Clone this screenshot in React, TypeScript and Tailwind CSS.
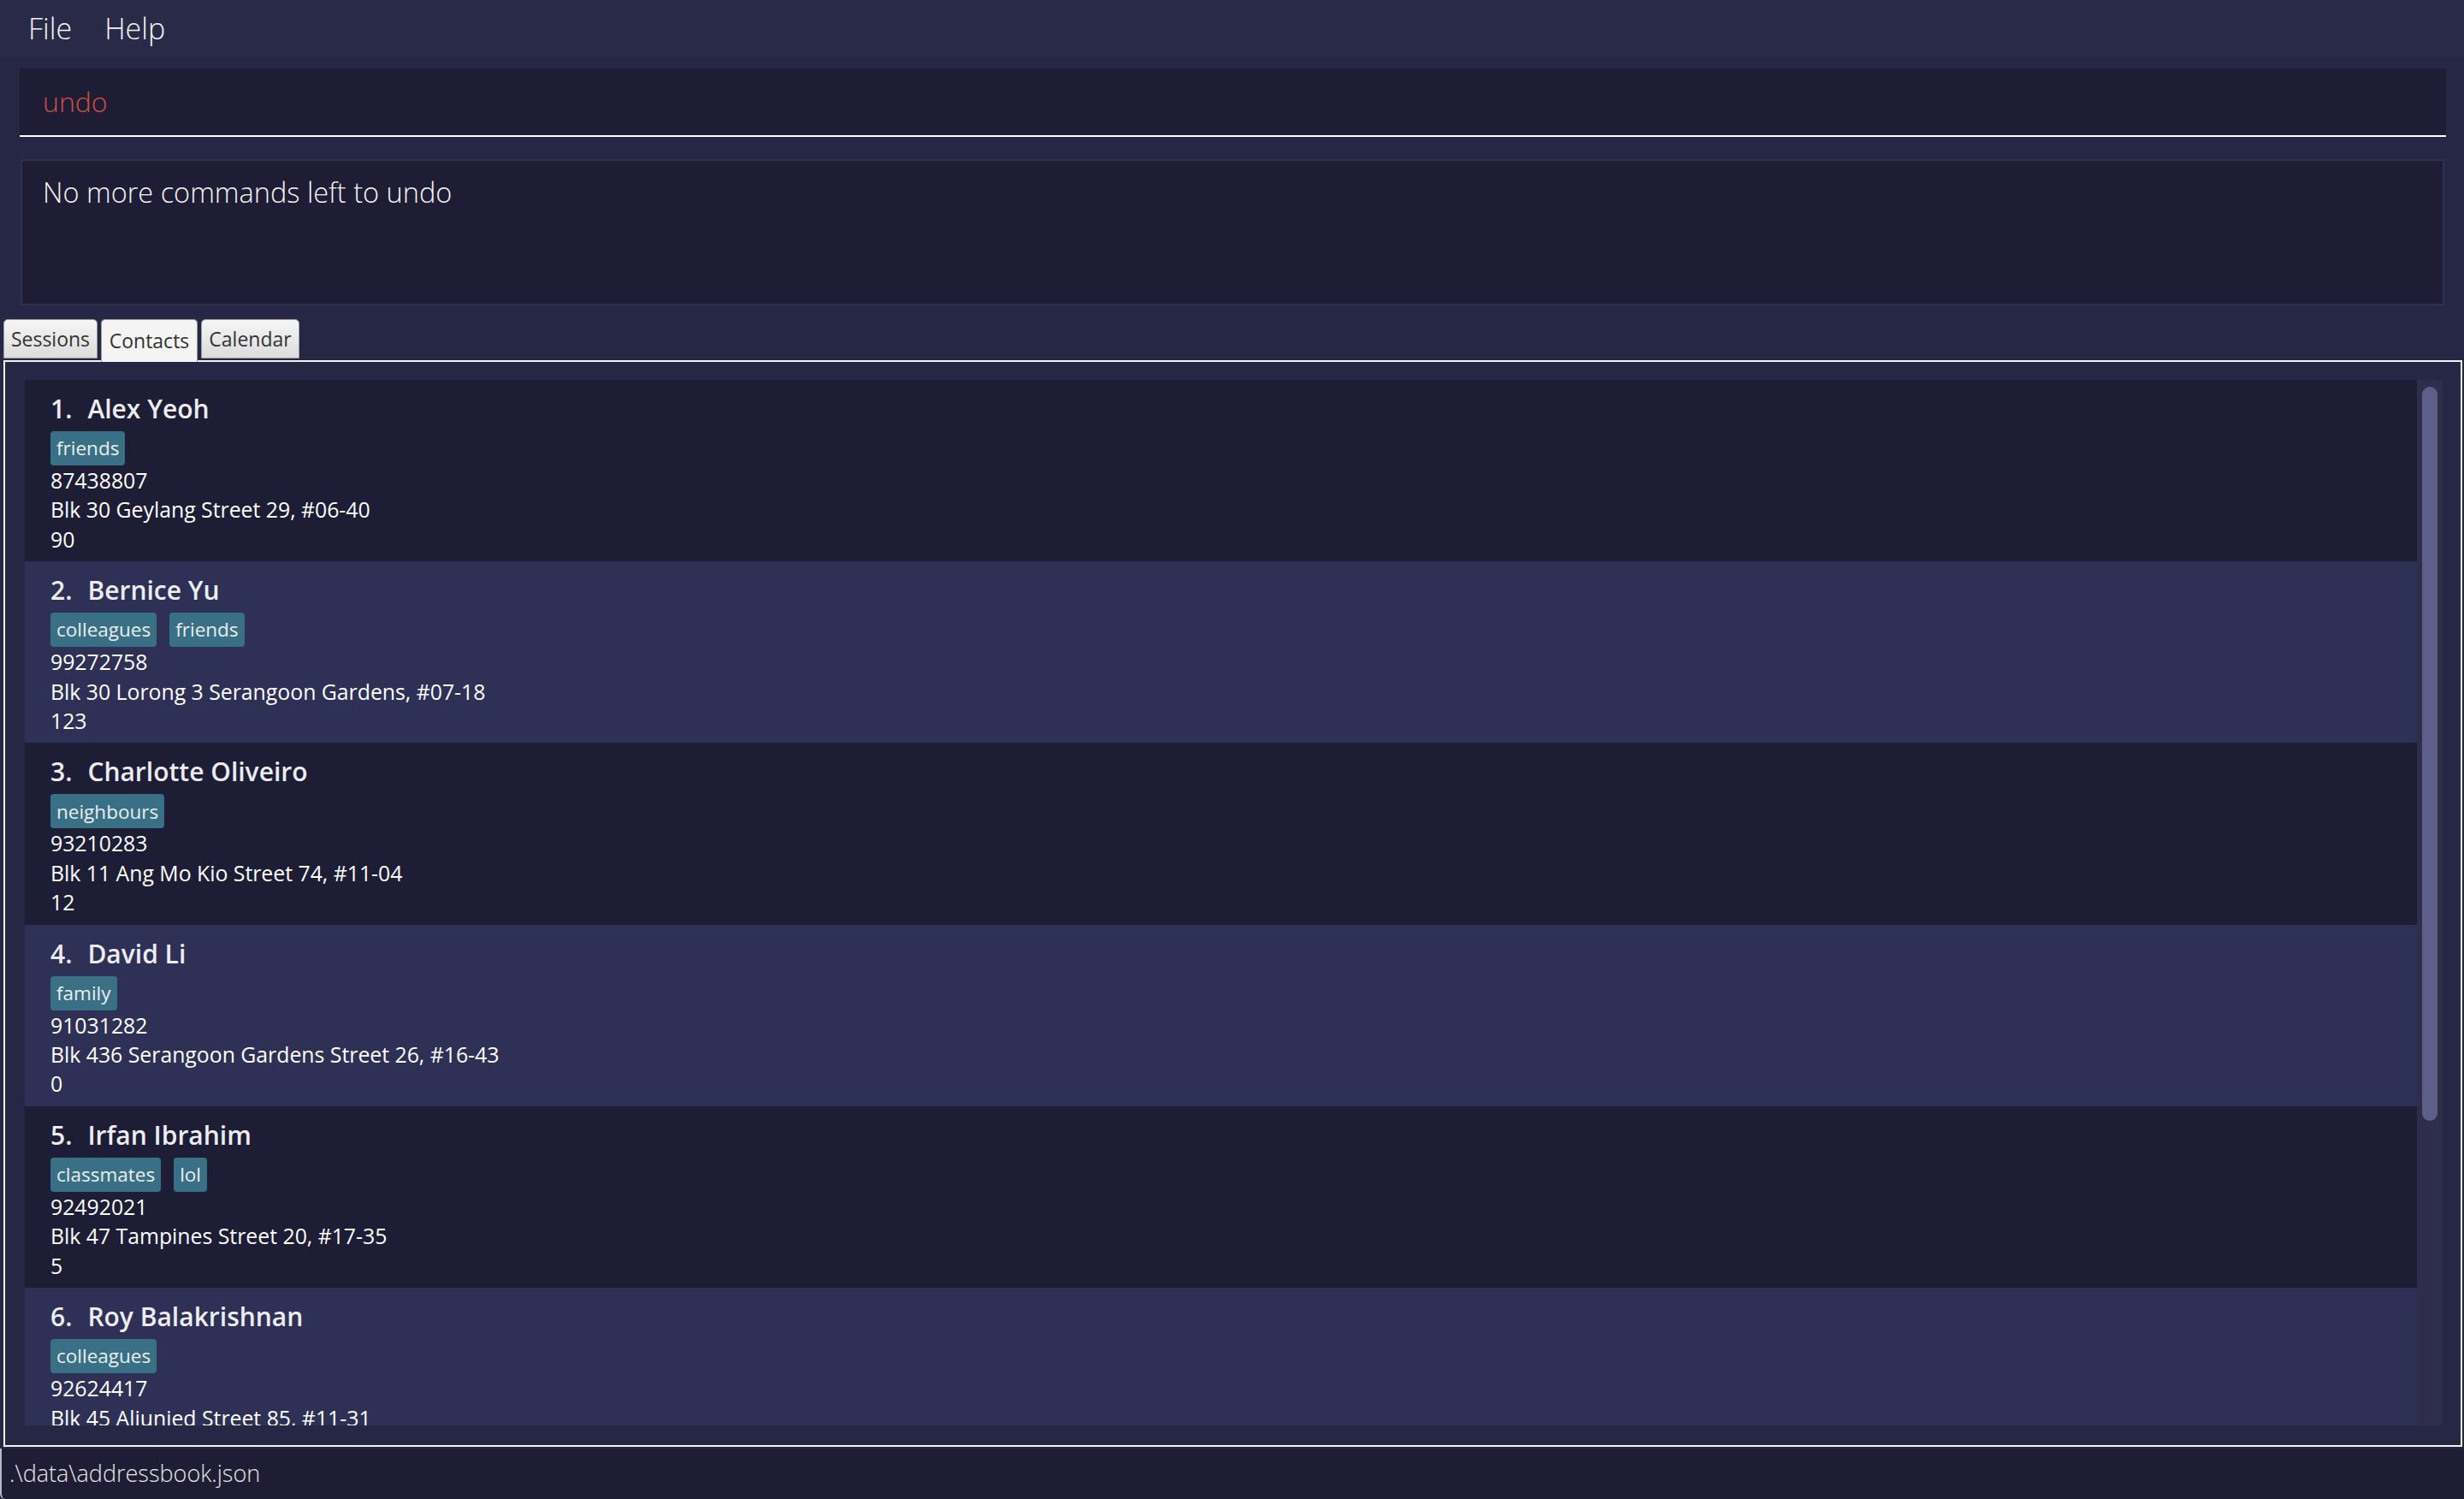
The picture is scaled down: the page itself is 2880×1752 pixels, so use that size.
import React from 'react';

type Person = {
  name: string;
  tags: string[];
  phone: string;
  address: string;
  value?: string;
};

const people: Person[] = [
  { name: 'Alex Yeoh', tags: ['friends'], phone: '87438807', address: 'Blk 30 Geylang Street 29, #06-40', value: '90' },
  { name: 'Bernice Yu', tags: ['colleagues', 'friends'], phone: '99272758', address: 'Blk 30 Lorong 3 Serangoon Gardens, #07-18', value: '123' },
  { name: 'Charlotte Oliveiro', tags: ['neighbours'], phone: '93210283', address: 'Blk 11 Ang Mo Kio Street 74, #11-04', value: '12' },
  { name: 'David Li', tags: ['family'], phone: '91031282', address: 'Blk 436 Serangoon Gardens Street 26, #16-43', value: '0' },
  { name: 'Irfan Ibrahim', tags: ['classmates', 'lol'], phone: '92492021', address: 'Blk 47 Tampines Street 20, #17-35', value: '5' },
  { name: 'Roy Balakrishnan', tags: ['colleagues'], phone: '92624417', address: 'Blk 45 Aljunied Street 85, #11-31' },
];

const font = { fontFamily: '"Open Sans", "Noto Sans", sans-serif' };

function PersonCard({ person, index }: { person: Person; index: number }) {
  const odd = index % 2 === 0;
  return (
    <div className={`shrink-0 pl-[30px] pt-[14px] pb-[9px] ${odd ? 'bg-[#1d1d35]' : 'bg-[#2e3056]'}`}>
      <div className="h-[40px] leading-[40px] text-[30px] font-semibold text-[#ececf2] whitespace-nowrap">
        <span className="mr-[18px]">{index + 1}.</span>
        {person.name}
      </div>
      <div className="mt-[6px] flex gap-[15px]">
        {person.tags.map((t) => (
          <span
            key={t}
            className="h-[40px] flex items-center px-[7px] rounded-[4px] bg-[#3a7085] text-[22.5px] text-[#e9eef0]"
          >
            {t}
          </span>
        ))}
      </div>
      <div className="text-[24.8px] leading-[34.4px] text-white whitespace-nowrap">
        <div>{person.phone}</div>
        <div>{person.address}</div>
        {person.value && <div>{person.value}</div>}
      </div>
    </div>
  );
}

function Tab({ label, active }: { label: string; active?: boolean }) {
  return (
    <div
      className={`flex items-center justify-center rounded-t-[5px] border border-[#9c9c9c] text-[23px] text-[#333333] ${
        active
          ? 'relative z-10 h-[50px] -mb-[2px] border-b-0 bg-[#f4f4f4] self-end'
          : 'h-[46px] bg-gradient-to-b from-[#f6f6f6] to-[#dcdcdc] self-start'
      }`}
      style={{ width: label === 'Sessions' ? 110 : label === 'Contacts' ? 113 : 115 }}
    >
      {label}
    </div>
  );
}

export default function App() {
  return (
    <div className="h-screen w-full flex flex-col bg-[#262744] overflow-hidden" style={font}>
      {/* menu bar */}
      <div className="h-[66px] shrink-0 flex items-center gap-[38px] pl-[33px] bg-[#282a48] text-[34px] font-light text-[#f2f2f2]">
        <span>File</span>
        <span>Help</span>
      </div>

      {/* command box */}
      <div className="shrink-0 pt-[14px] pl-[23px] pr-[21px]">
        <div className="h-[80px] flex items-center pl-[27px] bg-[#1e1d35] border-b-2 border-white text-[32px] font-light text-[#d0503f]">
          undo
        </div>
      </div>

      {/* result display */}
      <div className="shrink-0 mt-[26px] ml-[24px] mr-[23px]">
        <div className="h-[171px] border-2 border-[#2e3050] bg-[#1e1d35] pl-[24px] pt-[13px] text-[32.5px] font-light text-[#f4f4f4]">
          No more commands left to undo
        </div>
      </div>

      {/* tabs */}
      <div className="shrink-0 mt-[16px] h-[48px] flex items-stretch gap-[4px] pl-[4px]">
        <Tab label="Sessions" />
        <Tab label="Contacts" active />
        <Tab label="Calendar" />
      </div>

      {/* contacts panel */}
      <div className="flex-1 min-h-0 ml-[4px] mr-[2px] border-2 border-[#f2f2f2] flex pt-[21px] pb-[23px] pl-[23px] pr-[21px]">
        <div className="flex-1 min-w-0 flex flex-col overflow-hidden">
          {people.map((p, i) => (
            <PersonCard key={p.name} person={p} index={i} />
          ))}
        </div>
        <div className="w-[30px] shrink-0 bg-[#2e2e4b] pt-[8px] px-[6px]">
          <div className="h-[858px] w-full rounded-[10px] bg-[#5d5e8a]" />
        </div>
      </div>

      {/* status bar */}
      <div className="h-[59px] mt-[2px] shrink-0 flex items-center pl-[9px] bg-[#1e1d35] border-l-2 border-[#b8b8c0] rounded-bl-[6px] text-[27px] font-light text-[#e6e6e6]">
        .\data\addressbook.json
      </div>
    </div>
  );
}
